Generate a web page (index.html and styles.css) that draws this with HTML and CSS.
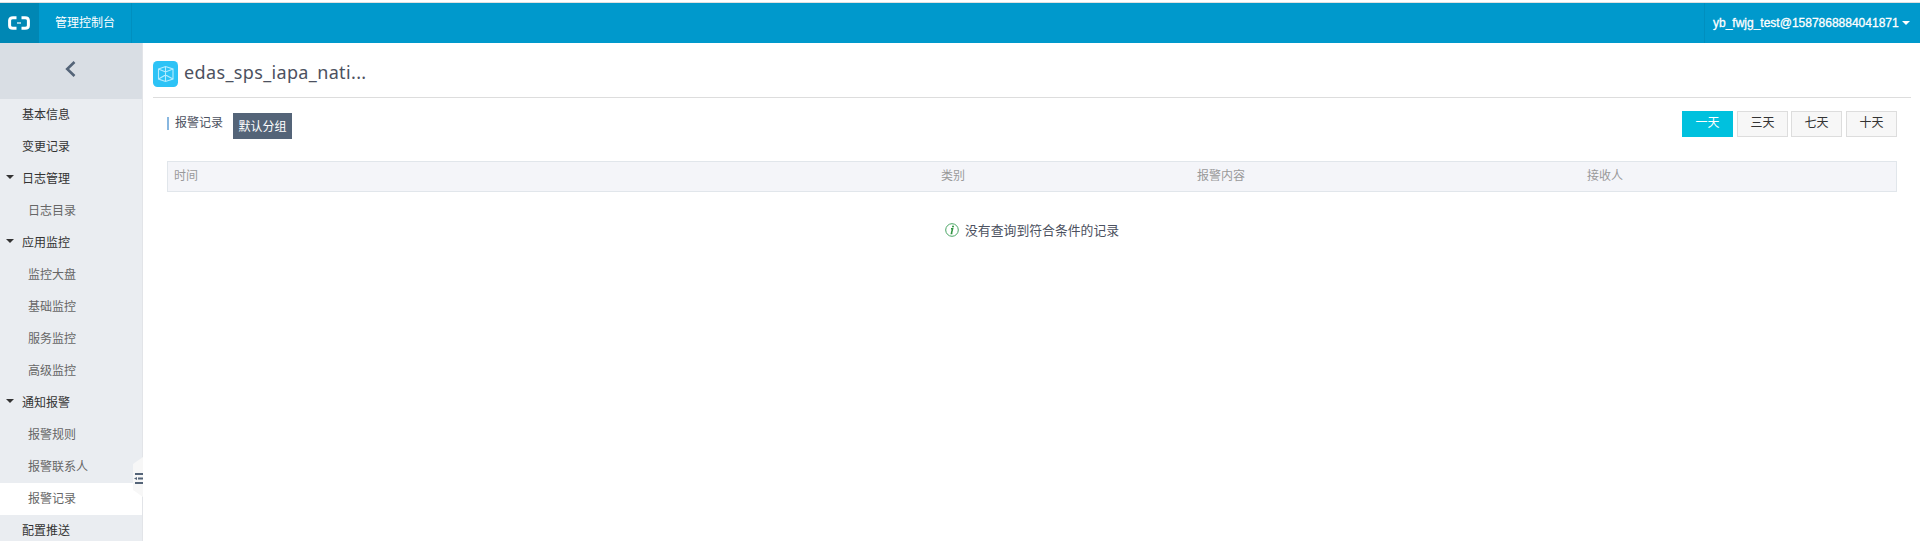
FILE: index.html
```html
<!DOCTYPE html>
<html lang="zh-CN">
<head>
<meta charset="utf-8">
<title>管理控制台</title>
<link rel="stylesheet" href="styles.css">
</head>
<body>
<header class="topbar">
  <a class="logo">
    <svg width="22" height="14" viewBox="0 0 22 14" fill="none" stroke="#fff">
      <path d="M8.5 1.7H5Q1.6 1.7 1.6 4.5V9.5Q1.6 12.3 5 12.3H8.5M13.5 1.7H17Q20.4 1.7 20.4 4.5V9.5Q20.4 12.3 17 12.3H13.5" stroke-width="3"/>
      <path d="M9 7H13" stroke-width="1.2"/>
    </svg>
  </a>
  <a class="console">管理控制台</a>
  <div class="account"><span class="account-name">yb_fwjg_test@1587868884041871</span><span class="caret"></span></div>
</header>
<div class="body">
  <aside class="sidebar">
    <div class="back">
      <svg width="12" height="18" viewBox="0 0 12 18" fill="none" stroke="#546478" stroke-width="2.6"><path d="M9.5 2L2.2 9L9.5 16"/></svg>
    </div>
    <nav class="menu">
      <a class="item">基本信息</a>
      <a class="item">变更记录</a>
      <a class="item group">日志管理</a>
      <a class="item sub">日志目录</a>
      <a class="item group">应用监控</a>
      <a class="item sub">监控大盘</a>
      <a class="item sub">基础监控</a>
      <a class="item sub">服务监控</a>
      <a class="item sub">高级监控</a>
      <a class="item group">通知报警</a>
      <a class="item sub">报警规则</a>
      <a class="item sub">报警联系人</a>
      <a class="item sub active">报警记录</a>
      <a class="item">配置推送</a>
    </nav>
    <svg class="handle" width="10" height="40" viewBox="0 0 10 40">
      <path d="M10 0L0 7V33L10 40Z" fill="#f7f7f7"/>
      <path d="M2 17H10M5 21.5H10M2 26H10" stroke="#546478" stroke-width="2"/>
      <path d="M1 21.5L4 20V23Z" fill="#546478"/>
    </svg>
  </aside>
  <main class="main">
    <div class="title">
      <svg class="app-icon" width="25" height="26" viewBox="0 0 25 26">
        <rect width="25" height="26" rx="4.5" fill="#2dc3f6"/>
        <path d="M5.5 8L12.5 5.5L20 8V18L12.5 20.5L5.5 18ZM5.5 8L12.5 11L20 8M12.5 5.5V20.5M5.5 18L12.5 14L20 18" fill="none" stroke="#b5ecff" stroke-width="1.1"/>
      </svg>
      <h1 class="name">edas_sps_iapa_nati...</h1>
    </div>
    <section class="content">
      <div class="toolbar">
        <h2 class="heading">报警记录</h2>
        <span class="tag">默认分组</span>
        <div class="ranges">
          <button class="range on">一天</button>
          <button class="range">三天</button>
          <button class="range third">七天</button>
          <button class="range">十天</button>
        </div>
      </div>
      <div class="thead"><span>时间</span><span>类别</span><span>报警内容</span><span>接收人</span></div>
      <div class="empty">
        <svg width="14" height="14" viewBox="0 0 14 14">
          <circle cx="7" cy="7" r="6.3" fill="none" stroke="#4aa564" stroke-width="1"/>
          <path d="M6 5.7H7.6L6.4 10.6H7.4" fill="none" stroke="#2f9440" stroke-width="1.5"/>
          <circle cx="8" cy="3.6" r="1" fill="#2f9440"/>
        </svg>
        <span class="empty-text">没有查询到符合条件的记录</span>
      </div>
    </section>
  </main>
</div>
</body>
</html>
```
FILE: styles.css
```css
* { box-sizing: border-box; }
body {
  margin: 0;
  height: 541px;
  overflow: hidden;
  display: flex;
  flex-direction: column;
  background: #fff;
  color: #333;
  font: 12px/18px "Liberation Sans", "Noto Sans CJK SC", sans-serif;
}
.topbar {
  flex: none;
  height: 41px;
  margin-top: 2px;
  border-top: 1px solid #e0e0e0;
  background: #0099cc;
  display: flex;
  color: #fff;
}
.logo {
  width: 39px;
  padding-left: 8px;
  background: #0087b4;
  display: flex;
  align-items: center;
}
.console {
  width: 93px;
  padding-left: 16px;
  border-right: 1px solid #008fbf;
  line-height: 41px;
}
.account {
  margin-left: auto;
  width: 216px;
  padding-left: 8px;
  border-left: 1px solid #008fbf;
  display: flex;
  align-items: center;
}
.account-name {
  width: 189px;
  white-space: nowrap;
  -webkit-text-stroke: .3px #fff;
}
.caret {
  border: 4px solid transparent;
  border-top-color: #fff;
  border-bottom: 0;
}
.body { flex: 1; display: flex; min-height: 0; }
.sidebar {
  position: relative;
  width: 143px;
  flex: none;
  background: #eaedf1;
  border-right: 1px solid #e2e4e8;
}
.back {
  height: 56px;
  padding: 17px 0 0 65px;
  background: #d9dee4;
}
.item {
  display: flex;
  align-items: center;
  height: 32px;
  padding-left: 22px;
}
.group { padding-left: 6px; }
.group::before {
  content: "";
  border: 4px solid transparent;
  border-top-color: #333;
  border-bottom: 0;
  margin: -4px 8px 0 0;
}
.sub { padding-left: 28px; color: #666; }
.active { background: #fff; }
.handle { position: absolute; right: -1px; top: 414px; }
.main { flex: 1; min-width: 0; padding: 0 9px 0 10px; }
.title {
  height: 55px;
  padding-top: 8px;
  border-bottom: 1px solid #ddd;
  display: flex;
  align-items: center;
}
.name {
  margin: -4px 0 0 6px;
  font: 18px/26px "Noto Sans", sans-serif;
  letter-spacing: .36px;
  color: #4c5160;
}
.content { padding: 13px 14px 0; }
.toolbar { display: flex; align-items: flex-start; height: 50px; }
.heading {
  margin: 6px 10px 0 0;
  padding-left: 6px;
  border-left: 2px solid #88b7e0;
  font: inherit;
  line-height: 13px;
  color: #4c5160;
}
.tag {
  margin-top: 2px;
  width: 59px;
  height: 26px;
  background: #546478;
  color: #fff;
  text-align: center;
  line-height: 28px;
}
.ranges { margin-left: auto; display: flex; gap: 4px; }
.range {
  width: 51px;
  height: 26px;
  padding: 0 0 2px;
  border: 1px solid #ddd;
  background: #f7f7f7;
  color: #333;
  font: inherit;
}
.third { margin: 0 0 0 -1px; }
.on { background: #00c1de; border-color: #00c1de; color: #fff; }
.thead {
  height: 31px;
  padding-left: 6px;
  border: 1px solid #e1e6eb;
  background: #f4f5f9;
  display: grid;
  grid-template-columns: 767px 256px 390px 1fr;
  line-height: 28px;
  color: #999;
}
.empty {
  margin: 28px 0 0 778px;
  display: flex;
  align-items: center;
  gap: 6px;
  font-size: 12.85px;
  color: #4c5160;
}
.empty-text { padding-top: 2px; }
```
